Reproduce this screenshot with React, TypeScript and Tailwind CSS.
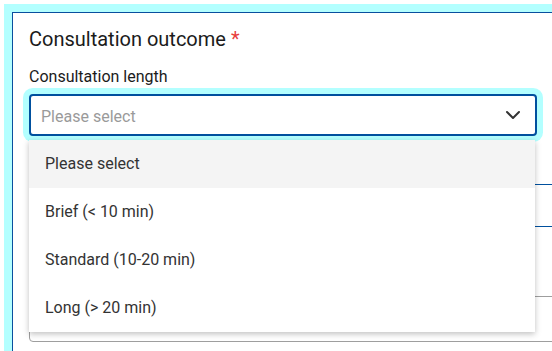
import { ChevronDown } from 'lucide-react'

const options = ['Please select', 'Brief (< 10 min)', 'Standard (10-20 min)', 'Long (> 20 min)']

export default function App() {
  return (
    <div
      className="w-[552px] h-[351px] overflow-hidden bg-white p-3"
      style={{ fontFamily: 'Roboto, "Noto Sans", Arial, sans-serif' }}
    >
      <div className="w-[640px] min-h-[400px] border border-[#0a4f9e] shadow-[0_0_0_8px_#b3ffff] bg-white pl-4 pt-[14px]">
        <h2 className="text-[20px] leading-6 text-[#1b1b1b]">
          Consultation outcome <span className="text-[#e8403c]">*</span>
        </h2>
        <label className="block mt-[14px] text-[16px] leading-6 text-[#1b1b1b]">Consultation length</label>

        <div className="relative mt-[5px] w-[508px]">
          <div className="flex h-[42px] items-center justify-between rounded-[4px] border-2 border-[#00509e] bg-white pl-[10px] pr-[10px] shadow-[0_0_0_6px_#b3ffff]">
            <span className="pt-[3px] text-[16px] text-[#9a9a9a]">Please select</span>
            <ChevronDown size={24} strokeWidth={2} className="-mt-[1px] text-[#333333]" />
          </div>

          <ul className="absolute left-0 top-[46px] z-10 w-[506px] bg-white shadow-[0_2px_6px_rgba(0,0,0,0.25)]">
            {options.map((opt, i) => (
              <li
                key={opt}
                className={`flex h-12 items-center px-4 text-[16px] text-[#333333] ${i === 0 ? 'bg-[#f4f4f4]' : ''}`}
              >
                {opt}
              </li>
            ))}
          </ul>
        </div>

        {/* fields sitting behind the open list */}
        <div className="mt-[48px] h-[43px] w-[600px] border border-[#00509e] rounded-[4px]" />
        <div className="mt-[69px] h-[46px] w-[600px] border border-[#9e9e9e] rounded-[4px]" />
      </div>
    </div>
  )
}
